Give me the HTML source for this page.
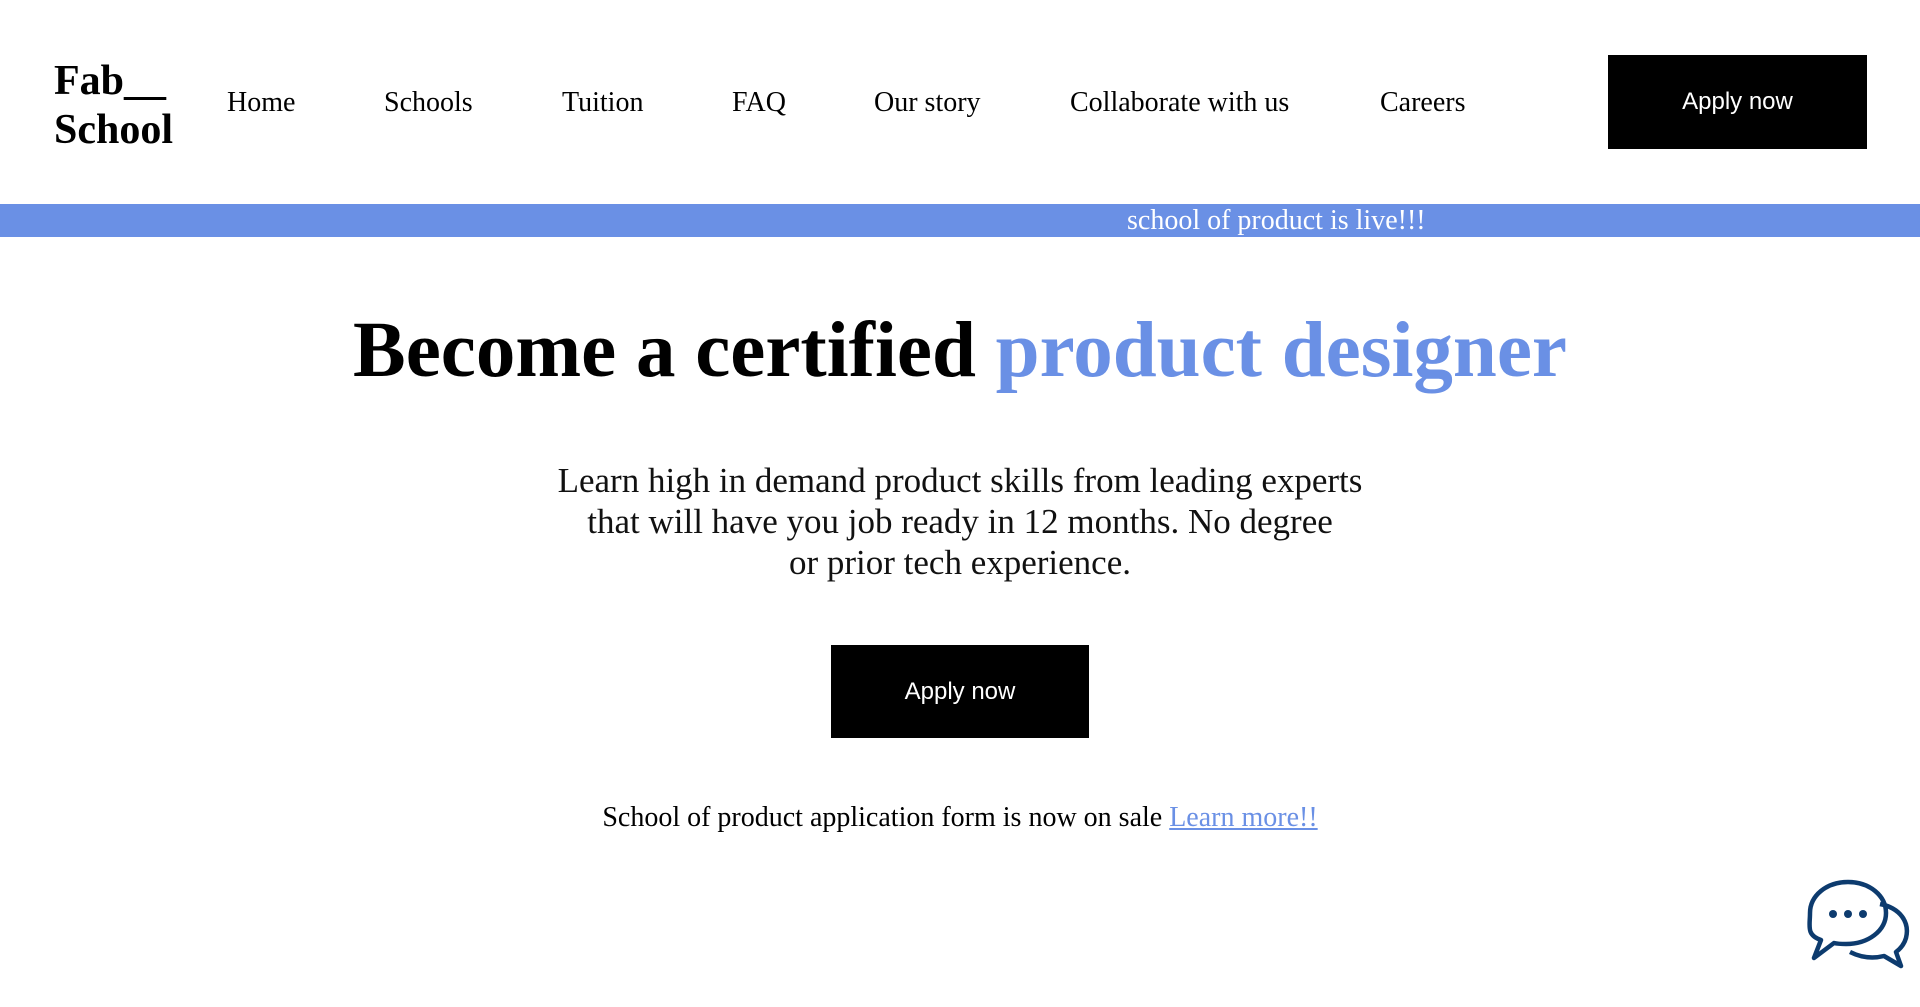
<!DOCTYPE html>
<html><head><meta charset="utf-8"><style>
html,body{margin:0;padding:0;background:#fff;}
body{width:1920px;height:1007px;position:relative;overflow:hidden;font-family:"Liberation Serif",serif;color:#000;}
.a{position:absolute;white-space:nowrap;line-height:1;}
.nav{font-size:28px;top:89px;}
.btn{position:absolute;background:#000;color:#fff;font-family:"Liberation Sans",sans-serif;font-size:24px;display:flex;align-items:center;justify-content:center;}
</style></head><body>
<div class="a" style="left:54px;top:57px;font-size:42px;font-weight:bold;line-height:49px;white-space:normal;width:130px;">Fab__<br>School</div>
<div class="a nav" style="left:227px;">Home</div>
<div class="a nav" style="left:384px;">Schools</div>
<div class="a nav" style="left:562px;">Tuition</div>
<div class="a nav" style="left:732px;">FAQ</div>
<div class="a nav" style="left:874px;">Our story</div>
<div class="a nav" style="left:1070px;">Collaborate with us</div>
<div class="a nav" style="left:1380px;">Careers</div>
<div class="btn" style="left:1608px;top:55px;width:259px;height:94px;">Apply now</div>
<div style="position:absolute;left:0;top:204px;width:1920px;height:33px;background:#6a90e5;"></div>
<div class="a" style="left:1127px;top:207px;font-size:28px;color:#fff;">school of product is live!!!</div>
<div class="a" style="left:0;width:1920px;text-align:center;top:311px;font-size:79px;font-weight:bold;">Become a certified <span style="color:#6a90e5">product designer</span></div>
<div class="a" style="left:0;width:1920px;text-align:center;top:460px;font-size:35px;line-height:41px;white-space:normal;color:#111;">Learn high in demand product skills from leading experts<br>that will have you job ready in 12 months. No degree<br>or prior tech experience.</div>
<div class="btn" style="left:831px;top:645px;width:258px;height:93px;">Apply now</div>
<div class="a" style="left:0;width:1920px;text-align:center;top:804px;font-size:28px;">School of product application form is now on sale <span style="color:#6a90e5;text-decoration:underline;">Learn more!!</span></div>
<svg style="position:absolute;left:1760px;top:860px" width="160" height="120" viewBox="0 0 160 120">
<g fill="none" stroke="#0d3b6e" stroke-width="4.5" stroke-linejoin="round">
<path d="M120 44 C140 48 150 62 146 78 C144 85 140 89 136 92 L141 106 L124 96 C112 99 100 97 90 92"/>
<path d="M88 22 C110 22 126 36 126 53 C126 71 108 84 86 84 C82 84 78 84 74 83 L54 98 L61 80 C46 75 50 66 50 53 C50 36 66 22 88 22 Z"/>
</g>
<g fill="#0d3b6e"><circle cx="73" cy="54" r="4"/><circle cx="88" cy="54" r="4"/><circle cx="103" cy="54" r="4"/></g>
</svg>
</body></html>
